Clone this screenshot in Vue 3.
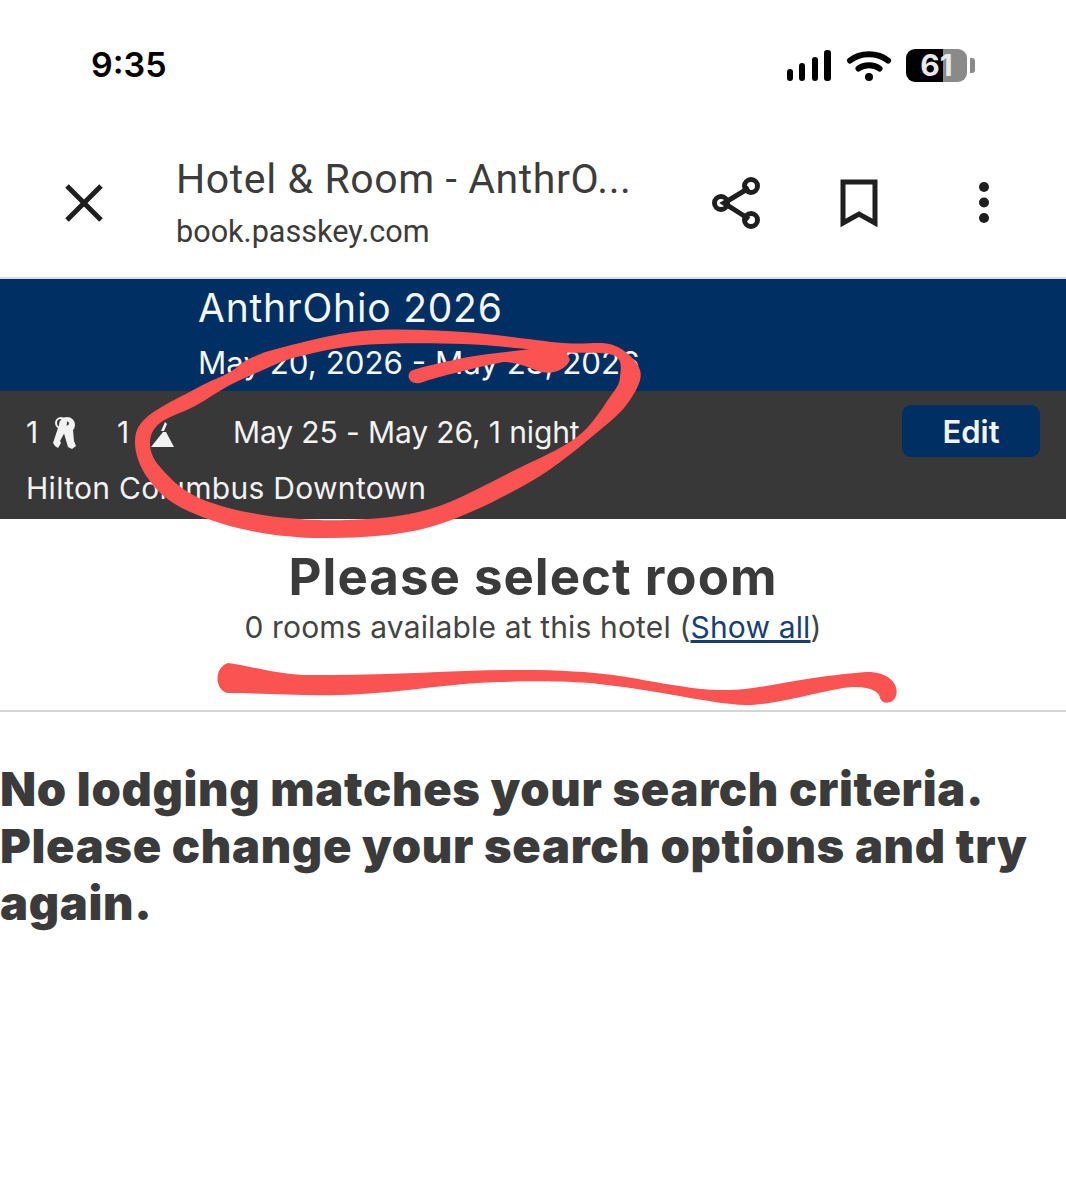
<template>
  <div class="page">
    <div class="status">
      <span class="status__time">9:35</span>
      <div class="status__icons">
        <svg class="signal" width="46" height="33" viewBox="0 0 46 33">
          <rect x="1" y="20" width="6" height="12" rx="3" />
          <rect x="13" y="14" width="6" height="18" rx="3" />
          <rect x="26" y="8" width="6" height="24" rx="3" />
          <rect x="38" y="1" width="7" height="31" rx="3" />
        </svg>
        <svg class="wifi" width="46" height="33" viewBox="0 0 46 33">
          <path d="M4 11.5 C14 3 32 3 42 11.5" />
          <path d="M12.5 19.5 C18 15 28 15 33.5 19.5" />
          <circle cx="23" cy="28" r="4" />
        </svg>
        <div class="battery">
          <div class="battery__body"><span class="battery__level">61</span></div>
          <div class="battery__nub"></div>
        </div>
      </div>
    </div>

    <div class="browser">
      <button class="browser__close" aria-label="Close">
        <svg width="40" height="40" viewBox="0 0 40 40"><path d="M3 3 L37 37 M37 3 L3 37" /></svg>
      </button>
      <div class="browser__title">
        <div class="browser__name">Hotel &amp; Room - AnthrO...</div>
        <div class="browser__url">book.passkey.com</div>
      </div>
      <div class="browser__actions">
        <svg class="share" width="50" height="54" viewBox="0 0 50 54">
          <path d="M37 12 L12 27 L37 43" />
          <circle cx="39" cy="10" r="6.5" />
          <circle cx="9" cy="27" r="6.5" />
          <circle cx="39" cy="44" r="6.5" />
        </svg>
        <svg class="bookmark" width="38" height="48" viewBox="0 0 38 48">
          <path d="M3 3 H35 V44 L19 35 L3 44 Z" />
        </svg>
        <svg class="dots" width="14" height="44" viewBox="0 0 14 44">
          <circle cx="7" cy="6" r="5" />
          <circle cx="7" cy="21.5" r="5" />
          <circle cx="7" cy="37" r="5" />
        </svg>
      </div>
    </div>

    <div class="event">
      <div class="event__name">AnthrOhio 2026</div>
      <div class="event__dates">May 20, 2026 - May 23, 2026</div>
    </div>

    <div class="summary">
      <div class="summary__info">
        <div class="summary__row">
          <span class="summary__count">1</span>
          <svg class="summary__keys" width="24" height="33" viewBox="0 0 24 33">
            <circle class="summary__ring" cx="8" cy="7" r="5" />
            <path d="M6 9 L0 27 L2 30 L5 32 L8 27 L7 25 L13 14 Z" />
            <path d="M14 1 A8 8 0 1 1 14 17 A8 8 0 1 1 14 1 Z M14 5.5 A2 2 0 1 0 14 9.5 A2 2 0 1 0 14 5.5 Z" fill-rule="evenodd" />
            <path d="M10 14 L15 31 L19 33 L23 30 L21 25 L20 14 Z" />
          </svg>
          <span class="summary__count summary__count--guests">1</span>
          <svg class="summary__guest" width="24" height="26" viewBox="0 0 24 26">
            <path d="M14 0 L16 2 L13 9 L10 9 Z" />
            <path d="M12 10 L15 10 L23 25 H0 Z" />
          </svg>
          <span class="summary__dates">May 25 - May 26, 1 night</span>
        </div>
        <div class="summary__hotel">Hilton Columbus Downtown</div>
      </div>
      <button class="summary__edit">Edit</button>
    </div>

    <div class="select">
      <h1 class="select__title">Please select room</h1>
      <p class="select__sub">0 rooms available at this hotel (<a href="#" class="select__link">Show all</a>)</p>
    </div>

    <p class="empty">No lodging matches your search criteria. Please change your search options and try again.</p>

    <svg class="scribble" width="1066" height="1200" viewBox="0 0 1066 1200">
      <path class="scribble__fill" fill-rule="evenodd" :d="ringPath" />
      <path class="scribble__fill" d="M413 370 C440 362 470 356 497 353 L563 345 L570 360 C565 372 548 375 538 371 C525 366 515 362 503 362 C475 368 440 376 420 383 C408 385 405 373 413 370 Z" />
      <path class="scribble__fill" d="M228 663 C255 667 285 676 315 675 C390 676 450 670 521 670 C560 670 590 672 613 675 C660 682 695 691 728 690 C760 690 800 677 866 672 C885 671 900 682 896 696 C893 704 882 705 880 698 C880 692 870 686 852 687 C825 689 780 705 746 705 C710 704 660 690 590 683 C555 681 530 681 498 682 C440 684 395 694 338 695 C300 696 260 693 228 693 C215 691 213 668 228 663 Z" />
    </svg>
  </div>
</template>

<script setup>
// traced contours of the hand-drawn circle
const outer = [[363, 331], [463, 332], [563, 343], [613, 345], [640, 370], [630, 400], [600, 430], [530, 482], [430, 527], [330, 538], [247, 530], [180, 507], [147, 477], [135, 443], [147, 417], [197, 388], [230, 372], [247, 360], [280, 348]]
const inner = [[363, 345], [463, 344], [557, 352], [613, 355], [620, 377], [610, 397], [577, 437], [513, 471], [430, 509], [347, 520], [263, 515], [197, 497], [160, 467], [150, 443], [160, 423], [195, 406], [230, 385], [263, 370], [297, 357]]

function smooth(points) {
  const n = points.length
  let d = `M${points[0][0]} ${points[0][1]}`
  for (let i = 0; i < n; i++) {
    const p0 = points[(i - 1 + n) % n]
    const p1 = points[i]
    const p2 = points[(i + 1) % n]
    const p3 = points[(i + 2) % n]
    const c1 = [p1[0] + (p2[0] - p0[0]) / 6, p1[1] + (p2[1] - p0[1]) / 6]
    const c2 = [p2[0] - (p3[0] - p1[0]) / 6, p2[1] - (p3[1] - p1[1]) / 6]
    d += ` C${c1[0]} ${c1[1]} ${c2[0]} ${c2[1]} ${p2[0]} ${p2[1]}`
  }
  return d + ' Z'
}

const ringPath = `${smooth(outer)} ${smooth(inner)}`
</script>

<style>
html, body {
  background: #fff;
}
</style>

<style scoped>
.page {
  position: relative;
  width: 1066px;
  height: 1200px;
  overflow: hidden;
  background: #fff;
  font-family: Inter, "Noto Sans", sans-serif;
  color: #3b3b3b;
}

.status {
  height: 130px;
  display: flex;
  justify-content: space-between;
  align-items: flex-start;
  padding: 44px 91px 0 91px;
  box-sizing: border-box;
}
.status__time {
  font-size: 34px;
  line-height: 42px;
  font-weight: 600;
  color: #000;
}
.status__icons {
  display: flex;
  align-items: center;
  gap: 14px;
  margin-top: 5px;
}
.signal rect {
  fill: #000;
}
.wifi path {
  fill: none;
  stroke: #000;
  stroke-width: 6;
  stroke-linecap: round;
}
.wifi circle {
  fill: #000;
}
.battery {
  display: flex;
  align-items: center;
  gap: 3px;
}
.battery__body {
  width: 61px;
  height: 33px;
  border-radius: 9px;
  background: linear-gradient(90deg, #000 0 61%, #8a8a8a 61% 100%);
  display: flex;
  align-items: center;
  justify-content: center;
}
.battery__level {
  color: #e9e9e9;
  font-size: 30px;
  font-weight: 700;
  line-height: 33px;
}
.battery__nub {
  width: 5px;
  height: 15px;
  background: #8a8a8a;
  border-radius: 0 3px 3px 0;
}

.browser {
  height: 149px;
  display: flex;
  align-items: center;
  padding: 0 75px 0 64px;
  border-bottom: 2px solid #d9dde2;
  box-sizing: border-box;
}
.browser__close {
  border: none;
  background: none;
  padding: 0;
  width: 40px;
  height: 40px;
  margin: -2px 72px 0 0;
}
.browser__close path {
  fill: none;
  stroke: #1f1f1f;
  stroke-width: 5;
}
.browser__title {
  flex: 1;
  font-family: Roboto, sans-serif;
}
.browser__name {
  font-size: 41px;
  line-height: 48px;
  letter-spacing: 0.6px;
  color: #3c3c3c;
}
.browser__url {
  font-size: 30.6px;
  line-height: 40px;
  margin-top: 9px;
  color: #3c3c3c;
}
.browser__actions {
  display: flex;
  align-items: center;
  margin-top: -2px;
}
.browser__actions path,
.browser__actions circle {
  fill: none;
  stroke: #1f1f1f;
  stroke-width: 5;
}
.browser__actions .dots circle {
  fill: #1f1f1f;
  stroke: none;
}
.share {
  margin-right: 78px;
}
.bookmark {
  margin-right: 99px;
}

.event {
  height: 112px;
  background: #002f63;
  color: #f4f6f8;
  padding-left: 198px;
  overflow: hidden;
}
.event__name {
  font-size: 39px;
  line-height: 46px;
  letter-spacing: 0.8px;
  margin-top: 6px;
}
.event__dates {
  font-size: 31.3px;
  line-height: 40px;
  margin-top: 12px;
}

.summary {
  height: 128px;
  background: #383838;
  color: #f2f2f2;
  display: flex;
  justify-content: space-between;
  padding: 14px 26px 0 26px;
  box-sizing: border-box;
}
.summary__info {
  font-size: 30px;
  line-height: 36px;
}
.summary__row {
  display: flex;
  align-items: center;
  height: 36px;
  margin-top: 9px;
}
.summary__count {
  width: 27px;
}
.summary__count--guests {
  width: 34px;
}
.summary__keys {
  fill: #f2f2f2;
  margin-right: 40px;
}
.summary__ring {
  fill: none;
  stroke: #f2f2f2;
  stroke-width: 2;
}
.summary__guest {
  fill: #f2f2f2;
  margin-top: 6px;
  margin-right: 58px;
}
.summary__dates {
  letter-spacing: -0.12px;
}
.summary__hotel {
  margin-top: 20px;
  letter-spacing: 0.3px;
}
.summary__edit {
  width: 138px;
  height: 52px;
  border: none;
  border-radius: 9px;
  background: #002f63;
  color: #f2f2f2;
  font-family: inherit;
  font-size: 31px;
  font-weight: 600;
}

.select {
  height: 193px;
  border-bottom: 2px solid #d6d6d6;
  box-sizing: border-box;
  text-align: center;
}
.select__title {
  margin: 0;
  padding-top: 28px;
  font-size: 51px;
  line-height: 60px;
  letter-spacing: 1px;
  font-weight: 700;
  color: #3b3b3b;
}
.select__sub {
  margin: 2px 0 0;
  font-size: 30px;
  line-height: 36px;
  letter-spacing: 0.15px;
  color: #444;
}
.select__link {
  color: #173f73;
}

.empty {
  margin: 48px 0 0;
  font-size: 47px;
  line-height: 57px;
  letter-spacing: 0.65px;
  font-weight: 900;
  color: #3b3b3b;
  padding-right: 20px;
}

.scribble {
  position: absolute;
  left: 0;
  top: 0;
  pointer-events: none;
}
.scribble__fill {
  fill: #fb5252;
}
</style>
